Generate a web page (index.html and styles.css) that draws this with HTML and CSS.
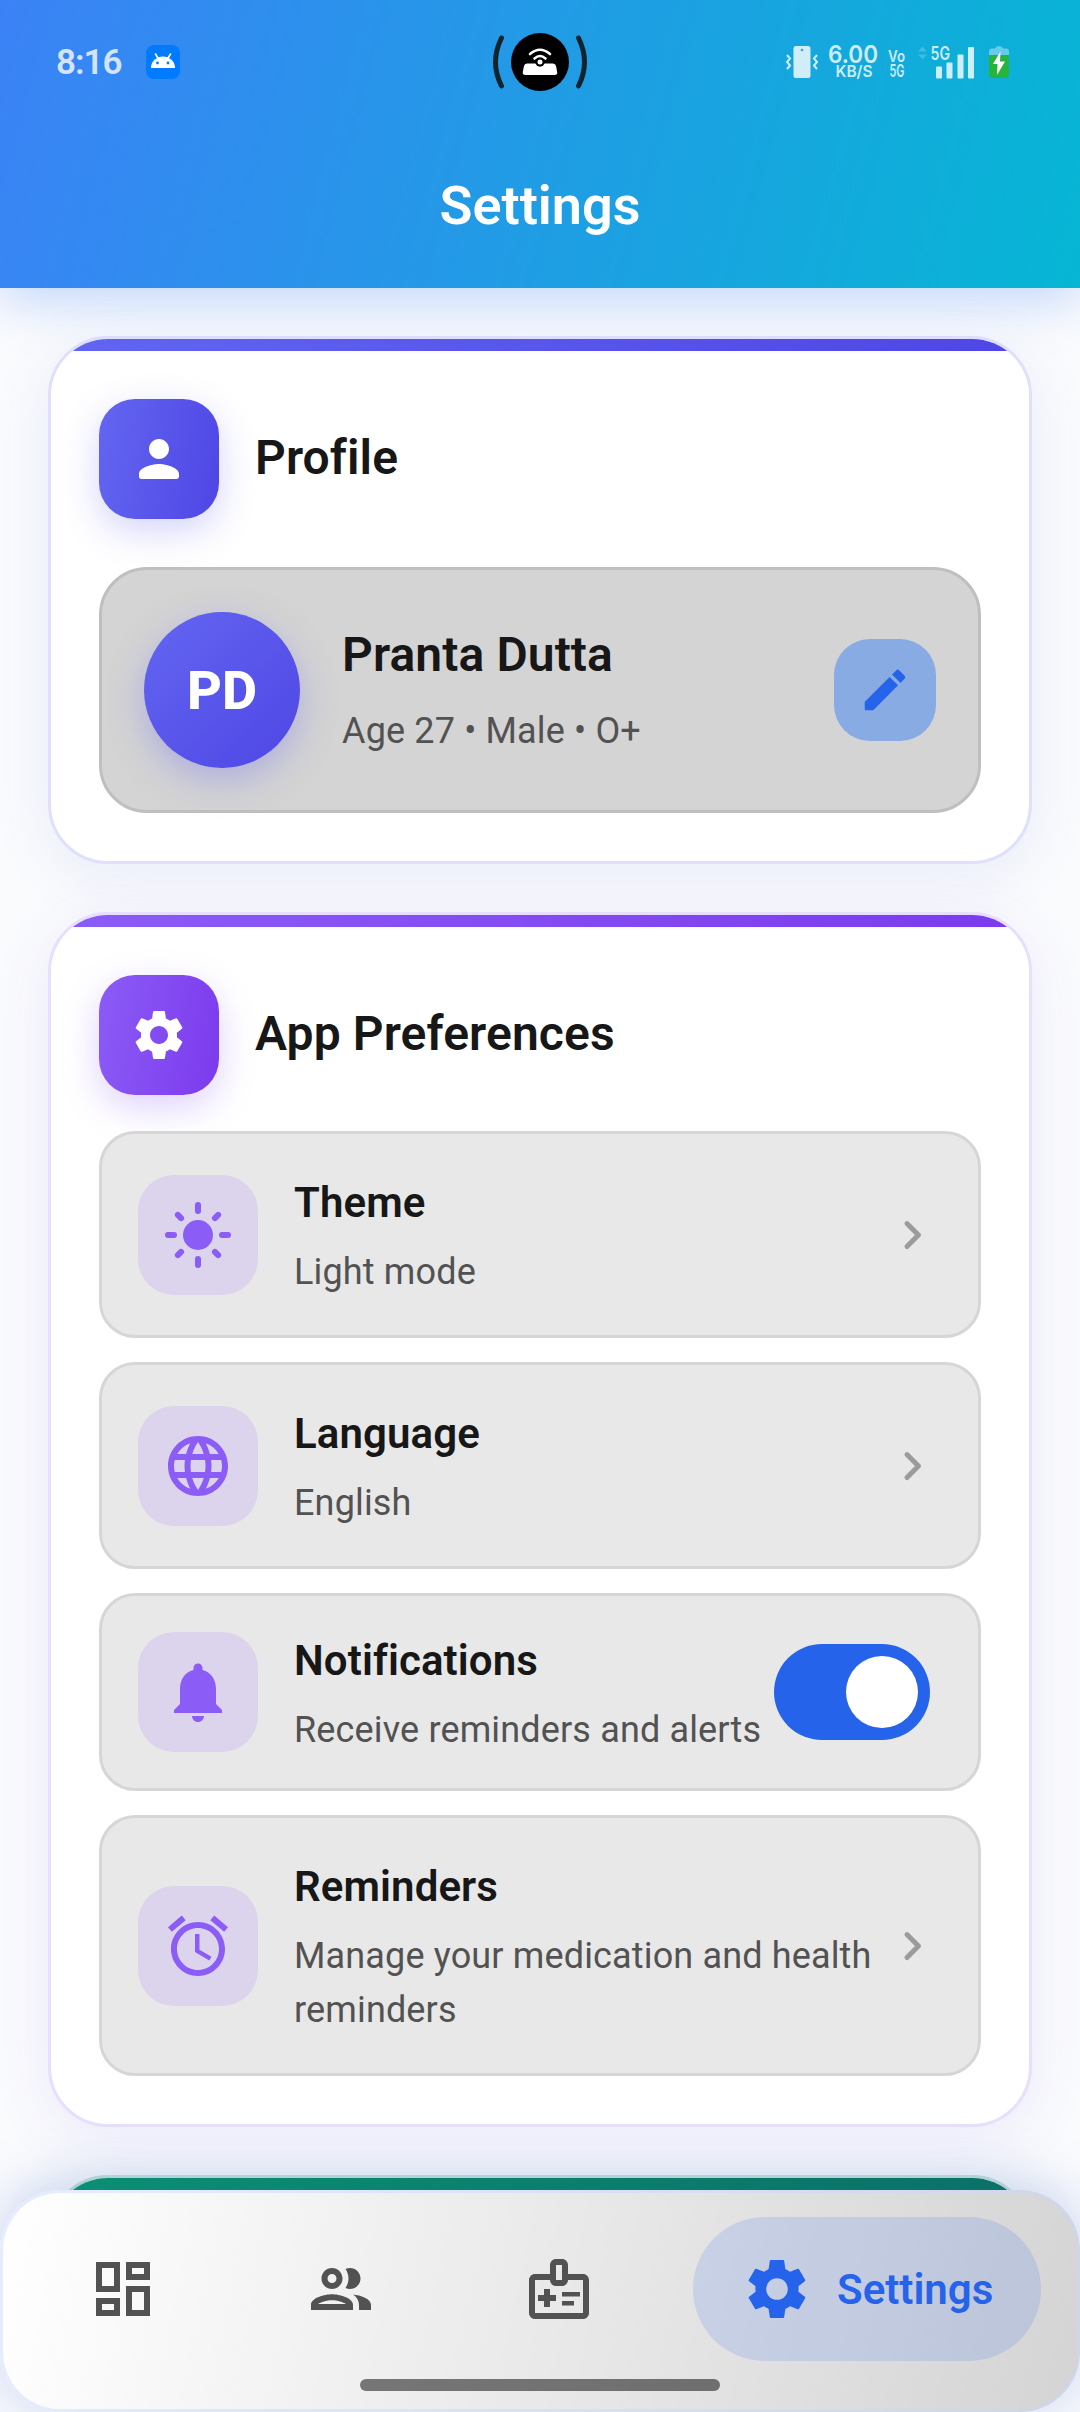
FILE: index.html
```html
<!DOCTYPE html>
<html lang="en">
<head>
<meta charset="utf-8">
<title>Settings</title>
<link rel="stylesheet" href="styles.css">
</head>
<body>
<div class="screen">
  <header class="app-bar">
    <div class="status">
      <div class="status-left">
        <span class="clock">8:16</span>
        <svg class="app-badge" viewBox="0 0 34 34"><rect width="34" height="34" rx="8" fill="#007aff"/><path d="M5 23a12 11.500 0 0 1 24 0z" fill="#fff"/><path d="M9.500 9l3 5M24.500 9l-3 5" stroke="#fff" stroke-width="1.600" stroke-linecap="round"/><circle cx="11.500" cy="18" r="1.400" fill="#007aff"/><circle cx="22" cy="18" r="1.400" fill="#007aff"/></svg>
      </div>
      <svg class="hotspot" viewBox="0 0 94 60"><circle cx="47" cy="30" r="29" fill="#000"/><path d="M8.500 6Q-3.500 30 8.500 54M85.500 6Q97.500 30 85.500 54" fill="none" stroke="#10242e" stroke-width="5" stroke-linecap="round"/><path d="M34 31.500h26q2.500 0 3 2.500l1.200 6q.500 3-2.700 3h-29q-3.200 0-2.700-3l1.200-6q.500-2.500 3-2.500z" fill="#fff"/><circle cx="47" cy="30" r="4.700" fill="#000"/><circle cx="47" cy="30" r="2.500" fill="#fff"/><path d="M41.500 26.500q5.500-5 11 0M37 22q10-8.500 20 0" fill="none" stroke="#fff" stroke-width="2.600" stroke-linecap="round"/></svg>
      <div class="status-right">
        <svg class="vibrate" viewBox="0 0 32 34"><rect x="7.500" y="1" width="17" height="32" rx="2.500" fill="currentColor"/><circle cx="16" cy="5" r="1.300" fill="#2aa9d8"/><path d="M1 10l3 3.500-3 3.500 3 3.500-3 3.500M31 10l-3 3.500 3 3.500-3 3.500 3 3.500" fill="none" stroke="currentColor" stroke-width="2"/></svg>
        <svg class="speed" viewBox="0 0 50 34"><text x="0" y="18" font-size="24" textLength="50" lengthAdjust="spacingAndGlyphs">6.00</text><text x="7.500" y="31.500" font-size="16" textLength="37" lengthAdjust="spacingAndGlyphs">KB/S</text></svg>
        <svg class="volte" viewBox="0 0 17 34"><text x="0" y="16.500" font-size="16.500" textLength="17" lengthAdjust="spacingAndGlyphs">Vo</text><text x="1.500" y="31.500" font-size="17.500" textLength="15" lengthAdjust="spacingAndGlyphs">5G</text></svg>
        <svg class="signal" viewBox="0 0 58 34"><path d="M1 6.500l4.500-5 4.500 5zM1 9.500l4.500 5 4.500-5z" fill="currentColor" opacity=".25"/><text x="13.500" y="15" font-size="18" textLength="19.500" lengthAdjust="spacingAndGlyphs">5G</text><rect x="19" y="21.500" width="6" height="12" rx="1" fill="currentColor"/><rect x="29.500" y="17.500" width="6" height="16" rx="1" fill="currentColor"/><rect x="40.500" y="9.500" width="6" height="24" rx="1" fill="currentColor"/><rect x="51" y="2" width="6" height="31.500" rx="1" fill="currentColor"/></svg>
        <svg class="battery" viewBox="0 0 20 34"><path d="M0 11V6.500q0-3 3-3h3q1-2.500 4-2.500t4 2.500h3q3 0 3 3V11z" fill="#65cbe8"/><path d="M0 10h20v20q0 3-3 3H3q-3 0-3-3z" fill="#27b43c"/><path d="M11.500 6.500L4 19h4.500L8 30l8-13.500h-5z" fill="#fff"/></svg>
      </div>
    </div>
    <h1>Settings</h1>
  </header>

  <main class="content">
    <section class="card indigo">
      <div class="stripe"></div>
      <div class="card-body">
        <div class="card-head">
          <div class="head-icon"><svg viewBox="0 0 24 24"><path d="M12 12c2.210 0 4-1.790 4-4s-1.790-4-4-4-4 1.790-4 4 1.790 4 4 4zm0 2c-2.670 0-8 1.340-8 4v1c0 .550.450 1 1 1h14c.550 0 1-.450 1-1v-1c0-2.660-5.330-4-8-4z"/></svg></div>
          <h2>Profile</h2>
        </div>
        <div class="profile">
          <div class="avatar">PD</div>
          <div class="profile-text">
            <h3>Pranta Dutta</h3>
            <p>Age 27 • Male • O+</p>
          </div>
          <div class="edit"><svg viewBox="0 0 24 24"><path d="M3 17.460v3.040c0 .280.220.500.500.500h3.040c.130 0 .260-.050.350-.150L17.810 9.940l-3.750-3.750L3.150 17.100c-.100.100-.150.220-.150.360zM20.710 7.040a.996.996 0 0 0 0-1.410l-2.340-2.340a.996.996 0 0 0-1.410 0l-1.830 1.830 3.750 3.750 1.830-1.830z"/></svg></div>
        </div>
      </div>
    </section>

    <section class="card violet">
      <div class="stripe"></div>
      <div class="card-body">
        <div class="card-head">
          <div class="head-icon"><svg viewBox="0 0 24 24"><path d="M19.140 12.940c.040-.300.060-.610.060-.940 0-.320-.020-.640-.070-.940l2.030-1.580c.180-.140.230-.410.120-.610l-1.920-3.320c-.120-.220-.370-.290-.590-.220l-2.390.960c-.500-.380-1.030-.700-1.620-.940l-.360-2.540c-.040-.240-.240-.410-.480-.410h-3.840c-.240 0-.430.170-.470.410l-.360 2.540c-.590.240-1.130.570-1.620.940l-2.390-.960c-.220-.080-.470 0-.590.220L2.740 8.870c-.120.210-.080.470.120.610l2.030 1.580c-.050.300-.090.630-.090.940s.020.640.070.940l-2.030 1.580c-.180.140-.230.410-.120.610l1.920 3.320c.120.220.370.290.590.220l2.390-.960c.500.380 1.030.700 1.620.940l.360 2.540c.050.240.240.410.480.410h3.840c.240 0 .440-.170.470-.410l.360-2.540c.590-.240 1.130-.560 1.620-.940l2.390.960c.220.080.470 0 .590-.220l1.920-3.320c.120-.220.070-.470-.120-.610l-2.010-1.580zM12 15.600c-1.980 0-3.600-1.620-3.600-3.600s1.620-3.600 3.600-3.600 3.600 1.620 3.600 3.600-1.620 3.600-3.600 3.600z"/></svg></div>
          <h2>App Preferences</h2>
        </div>
        <div class="rows">
          <div class="row">
            <div class="row-icon"><svg viewBox="0 0 24 24"><circle cx="12" cy="12" r="5"/><path d="M2 12h2M20 12h2M12 2v2M12 20v2M5.290 5.290l1.060 1.060M17.650 17.650l1.060 1.060M5.290 18.710l1.060-1.060M17.650 6.350l1.060-1.060" stroke="currentColor" stroke-width="2" stroke-linecap="round"/></svg></div>
            <div class="row-text"><h4>Theme</h4><p>Light mode</p></div>
            <svg class="chevron" viewBox="0 0 24 24"><path d="M9.290 15.880 13.170 12 9.290 8.120a.996.996 0 0 1 1.410-1.410l4.590 4.590c.390.390.390 1.020 0 1.410L10.700 17.300a.996.996 0 0 1-1.410-1.420z"/></svg>
          </div>
          <div class="row">
            <div class="row-icon"><svg viewBox="0 0 24 24"><path d="M11.990 2C6.470 2 2 6.480 2 12s4.470 10 9.990 10C17.520 22 22 17.520 22 12S17.520 2 11.990 2zm6.930 6h-2.950c-.320-1.250-.780-2.450-1.380-3.560 1.840.630 3.370 1.910 4.330 3.560zM12 4.040c.830 1.200 1.480 2.530 1.910 3.960h-3.820c.430-1.430 1.080-2.760 1.910-3.960zM4.260 14C4.100 13.360 4 12.690 4 12s.100-1.360.260-2h3.380c-.080.660-.140 1.320-.140 2s.060 1.340.140 2H4.260zm.820 2h2.950c.320 1.250.780 2.450 1.380 3.560-1.840-.630-3.370-1.900-4.330-3.560zm2.950-8H5.080c.960-1.660 2.490-2.930 4.330-3.560C8.810 5.550 8.350 6.750 8.030 8zM12 19.960c-.830-1.200-1.480-2.530-1.910-3.960h3.820c-.430 1.430-1.080 2.760-1.910 3.960zM14.340 14H9.660c-.090-.660-.160-1.320-.160-2s.070-1.350.160-2h4.680c.090.650.160 1.320.160 2s-.070 1.340-.160 2zm.250 5.560c.600-1.110 1.060-2.310 1.380-3.560h2.950c-.960 1.650-2.490 2.930-4.330 3.560zM16.360 14c.080-.660.140-1.320.140-2s-.060-1.340-.140-2h3.380c.160.640.260 1.310.260 2s-.100 1.360-.260 2h-3.380z"/></svg></div>
            <div class="row-text"><h4>Language</h4><p>English</p></div>
            <svg class="chevron" viewBox="0 0 24 24"><path d="M9.290 15.880 13.170 12 9.290 8.120a.996.996 0 0 1 1.410-1.410l4.590 4.590c.390.390.390 1.020 0 1.410L10.700 17.300a.996.996 0 0 1-1.410-1.420z"/></svg>
          </div>
          <div class="row with-switch">
            <div class="row-icon"><svg viewBox="0 0 24 24"><path d="M12 22c1.100 0 2-.900 2-2h-4c0 1.100.890 2 2 2zm6-6v-5c0-3.070-1.640-5.640-4.500-6.320V4c0-.830-.670-1.500-1.500-1.500s-1.500.670-1.500 1.500v.680C7.630 5.360 6 7.920 6 11v5l-2 2v1h16v-1l-2-2z"/></svg></div>
            <div class="row-text"><h4>Notifications</h4><p>Receive reminders and alerts</p></div>
            <div class="switch"><span class="thumb"></span></div>
          </div>
          <div class="row">
            <div class="row-icon"><svg viewBox="0 0 24 24"><path d="M22 5.720l-4.600-3.860-1.290 1.530 4.600 3.860L22 5.720zM7.880 3.390L6.600 1.860 2 5.710l1.290 1.530 4.590-3.850zM12.500 8H11v6l4.750 2.850.750-1.230-4-2.370V8zM12 4c-4.970 0-9 4.030-9 9s4.020 9 9 9c4.970 0 9-4.030 9-9s-4.030-9-9-9zm0 16c-3.870 0-7-3.130-7-7s3.130-7 7-7 7 3.130 7 7-3.130 7-7 7z"/></svg></div>
            <div class="row-text"><h4>Reminders</h4><p>Manage your medication and health reminders</p></div>
            <svg class="chevron" viewBox="0 0 24 24"><path d="M9.290 15.880 13.170 12 9.290 8.120a.996.996 0 0 1 1.410-1.410l4.590 4.590c.390.390.390 1.020 0 1.410L10.700 17.300a.996.996 0 0 1-1.410-1.420z"/></svg>
          </div>
        </div>
      </div>
    </section>

    <section class="card green">
      <div class="stripe"></div>
      <div class="card-body"></div>
    </section>
  </main>

  <nav class="bottom-nav">
    <div class="nav-item"><svg viewBox="0 0 24 24"><path d="M19 5v2h-4V5h4M9 5v6H5V5h4m10 8v6h-4v-6h4M9 17v2H5v-2h4M21 3h-8v6h8V3zM11 3H3v10h8V3zm10 8h-8v10h8V11zm-10 4H3v6h8v-6z"/></svg></div>
    <div class="nav-item"><svg viewBox="0 0 24 24"><path d="M9 13.750c-2.340 0-7 1.170-7 3.500V19h14v-1.750c0-2.330-4.660-3.500-7-3.500zM4.340 17c.840-.580 2.870-1.250 4.660-1.250s3.820.670 4.660 1.250H4.340zM9 12c1.930 0 3.500-1.570 3.500-3.500S10.930 5 9 5 5.500 6.570 5.500 8.500 7.070 12 9 12zm0-5c.830 0 1.500.670 1.500 1.500S9.830 10 9 10s-1.500-.670-1.500-1.500S8.170 7 9 7zm7.040 6.810c1.160.840 1.960 1.960 1.960 3.440V19h4v-1.750c0-2.020-3.500-3.170-5.960-3.440zM15 12c1.930 0 3.500-1.570 3.500-3.500S16.930 5 15 5c-.540 0-1.040.130-1.500.350.630.890 1 1.980 1 3.150s-.370 2.260-1 3.150c.460.220.960.350 1.500.350z"/></svg></div>
    <div class="nav-item"><svg viewBox="0 0 24 24"><path fill-rule="evenodd" d="M20 7h-5V4c0-1.100-.900-2-2-2h-2c-1.100 0-2 .900-2 2v3H4c-1.100 0-2 .900-2 2v11c0 1.100.900 2 2 2h16c1.100 0 2-.900 2-2V9c0-1.100-.900-2-2-2zM11 4h2v5h-2zM20 20H4V9h5c0 1.100.900 2 2 2h2c1.100 0 2-.900 2-2h5z"/><path d="M11 16H9v2H7v-2H5v-2h2v-2h2v2h2zM13 14.500V13h6v1.500zM13 17.500V16h4v1.500z"/></svg></div>
    <div class="nav-item active"><svg viewBox="-12 -12 24 24"><defs><path id="tooth" d="M-2.850-6.200L-2.400-9.350Q-2.350-9.650-2.050-9.650H2.050Q2.350-9.650 2.400-9.350L2.850-6.200z"/></defs><circle r="5.400" fill="none" stroke="currentColor" stroke-width="3.600"/><use href="#tooth"/><use href="#tooth" transform="rotate(60)"/><use href="#tooth" transform="rotate(120)"/><use href="#tooth" transform="rotate(180)"/><use href="#tooth" transform="rotate(240)"/><use href="#tooth" transform="rotate(300)"/></svg><span>Settings</span></div>
  </nav>
  <div class="home-bar"></div>
</div>
</body>
</html>
```
FILE: styles.css
```css
* { box-sizing: border-box; margin: 0; padding: 0; }
body { width: 1080px; height: 2412px; overflow: hidden; font-family: Roboto, sans-serif; color: #171717; }
svg { display: block; fill: currentColor; flex: none; overflow: visible; }
.screen { position: relative; width: 1080px; height: 2412px; overflow: hidden; background: #fafbfd; display: flex; flex-direction: column; }

.app-bar { position: relative; height: 288px; flex: none; background: linear-gradient(104.900deg, #3b82f6, #06b6d4); box-shadow: 0 12px 48px rgba(59, 130, 246, .3); }
.status { height: 124px; padding: 0 71px 0 56px; display: grid; grid-template-columns: 437px 94px 1fr; align-items: center; color: rgba(255, 255, 255, .8); }
.status-left { display: flex; align-items: center; gap: 24px; }
.clock { font-size: 35px; font-weight: 600; width: 66px; letter-spacing: -1px; }
.app-badge { width: 34px; height: 34px; }
.hotspot { width: 94px; height: 60px; }
.status-right { display: flex; align-items: center; justify-content: flex-end; font-family: Inter, sans-serif; font-weight: 600; }
.vibrate { width: 32px; height: 34px; margin-right: 10px; }
.speed { width: 50px; height: 34px; margin-right: 10px; }
.volte { width: 17px; height: 34px; margin-right: 12px; }
.signal { width: 58px; height: 34px; margin-right: 14px; }
.battery { width: 20px; height: 34px; }
h1 { text-align: center; font-size: 54px; font-weight: 600; line-height: 82px; margin-top: 41px; color: #fff; }

.content { padding: 48px 48px 0; display: flex; flex-direction: column; gap: 48px; }
.card { flex: none; border: 3px solid var(--edge); border-radius: 60px; background: #fff; background-clip: padding-box; box-shadow: 0 12px 60px var(--glow); }
.stripe { height: 72px; margin-bottom: -60px; border-radius: 57px 57px 0 0; background: linear-gradient(#fff, #fff) 0 12px no-repeat, linear-gradient(90deg, var(--from), var(--to)); }
.card-body { position: relative; padding: 48px; }
.indigo { --from: #6366f1; --to: #4f46e5; --edge: #e0e0fc; --glow: rgba(79, 100, 229, .1); }
.violet { --from: #8b5cf6; --to: #7c3aed; --edge: #e8defd; --glow: rgba(110, 80, 237, .1); }
.green { --from: #059669; --to: #04735a; --edge: #c0dfdc; --glow: rgba(16, 120, 129, .1); height: 200px; }
.card-head { display: flex; align-items: center; gap: 36px; }
.head-icon { width: 120px; height: 120px; border-radius: 36px; background: linear-gradient(100deg, var(--from), var(--to)); box-shadow: 0 12px 36px color-mix(in srgb, var(--from) 28%, transparent); display: grid; place-items: center; color: #fff; }
.head-icon svg { width: 60px; height: 60px; }
h2 { font-size: 48px; font-weight: 650; line-height: 72px; letter-spacing: .1px; position: relative; top: -1px; }

.profile { margin-top: 48px; height: 246px; border: 3px solid #bfbfbf; border-radius: 48px; background: #d4d4d4; padding: 0 42px; display: flex; align-items: center; gap: 42px; }
.avatar { width: 156px; height: 156px; border-radius: 50%; background: linear-gradient(135deg, #6366f1, #4f46e5); box-shadow: 0 12px 36px rgba(99, 102, 241, .35); color: #fff; font-size: 54px; font-weight: 800; display: grid; place-items: center; }
.profile-text { flex: 1; }
h3 { font-size: 48px; font-weight: 650; line-height: 66px; letter-spacing: .1px; }
p { font-size: 36px; line-height: 54px; letter-spacing: .15px; color: #525252; }
.profile-text p { margin-top: 16px; }
.edit { width: 102px; height: 102px; border-radius: 36px; background: #88abe4; color: #2563eb; display: grid; place-items: center; }
.edit svg { width: 54px; height: 54px; }

.rows { margin-top: 36px; display: flex; flex-direction: column; gap: 24px; }
.row { border: 3px solid #d6d6d6; border-radius: 36px; background: #e8e8e8; padding: 36px; display: flex; align-items: center; }
.row-icon { width: 120px; height: 120px; flex: none; border-radius: 36px; background: #dcd4ec; color: #8b5cf6; display: grid; place-items: center; margin-right: 36px; }
.row-icon svg { width: 72px; height: 72px; }
.row-text { flex: 1; }
h4 { font-size: 42px; font-weight: 600; line-height: 66px; letter-spacing: .1px; margin-bottom: 9px; }
.chevron { width: 60px; height: 60px; color: #9b9b9b; }
.with-switch { padding: 31.500px 48px 31.500px 36px; }
.with-switch .row-text { white-space: nowrap; }
.switch { width: 156px; height: 96px; border-radius: 48px; background: #2563eb; padding: 12px; display: flex; justify-content: flex-end; }
.thumb { width: 72px; height: 72px; border-radius: 50%; background: #fff; }

.bottom-nav { position: absolute; left: 0; bottom: 0; width: 1080px; height: 222px; border: 3px solid rgba(200, 215, 255, .45); border-radius: 60px; background: linear-gradient(101.600deg, #fff, #d4d4d4) border-box; box-shadow: 0 -3px 60px rgba(60, 100, 200, .28); display: flex; gap: 146px; padding: 24px 36px 0 84px; }
.nav-item { height: 144px; display: flex; align-items: center; color: #525252; }
.nav-item svg { width: 72px; height: 72px; }
.active { width: 348px; margin-left: -48px; padding-left: 48px; gap: 24px; border-radius: 72px; background: rgba(37, 99, 235, .15); color: #2563eb; font-size: 42px; font-weight: 600; }
.home-bar { position: absolute; left: 360px; bottom: 21px; width: 360px; height: 12px; border-radius: 6px; background: rgba(0, 0, 0, .51); }
```
